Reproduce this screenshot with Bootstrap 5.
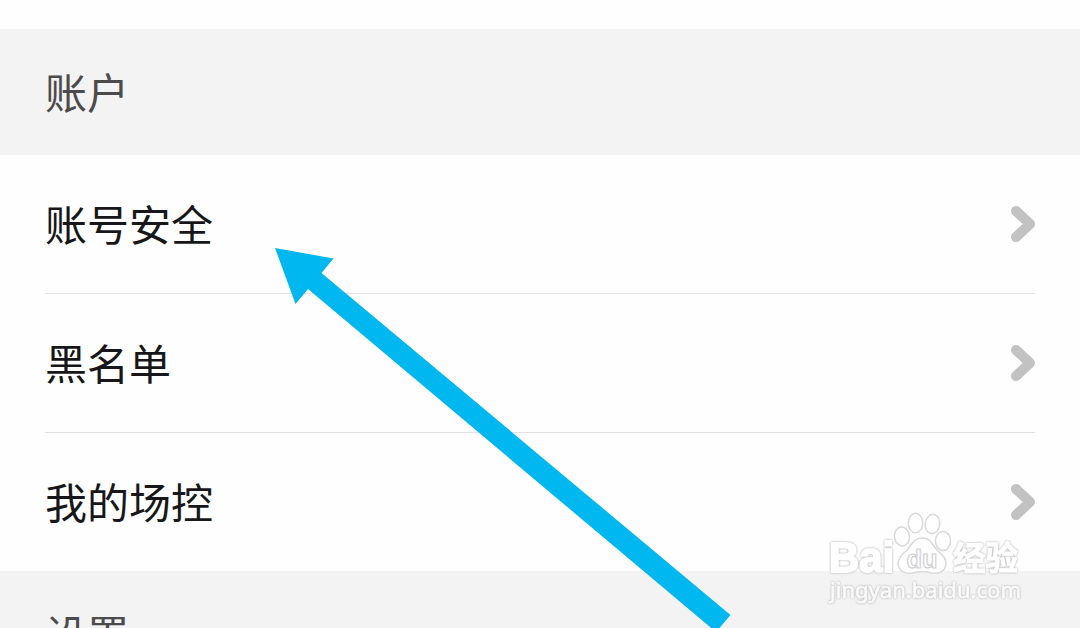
<!DOCTYPE html>
<html lang="zh-CN">
<head>
    <meta charset="UTF-8">
    <meta name="viewport" content="width=device-width, initial-scale=1.0">
    <title>设置</title>
    <link href="https://cdn.jsdelivr.net/npm/bootstrap@5.3.0/dist/css/bootstrap.min.css" rel="stylesheet">
    <style>
        body {
            height: 628px;
            padding-top: 29px;
            background-color: #fefefe;
            color: #17171a;
            font-family: "Noto Sans CJK SC", sans-serif;
            font-size: 42px;
            line-height: 62px;
        }
        .section-title {
            height: 126px;
            padding: 31px 45px 0;
            background-color: #f3f3f3;
            color: #4b4b4b;
        }
        .section-last {
            height: 57px;
            overflow: hidden;
        }
        .settings-list .list-group-item {
            height: 139px;
            margin: 0 45px;
            padding: 0;
            background-color: transparent;
            color: inherit;
            border-color: #e2e2e2;
        }
        .settings-list .list-group-item:last-child {
            height: 138px;
        }
        .settings-list span {
            padding-bottom: 3px;
        }
        .settings-list svg {
            width: 24px;
            height: 36px;
        }
        /* Pointer and watermark lie over the list */
        .overlay-art {
            z-index: 5;
            pointer-events: none;
        }
        .wm-outline {
            filter: drop-shadow(0 0 .8px #a8a8a8);
        }
    </style>
</head>
<body class="position-relative overflow-hidden">

<div class="section-title">账户</div>

<div class="list-group list-group-flush settings-list">
    <a href="#" class="list-group-item d-flex align-items-center justify-content-between">
        <span>账号安全</span>
        <svg viewBox="0 0 24 36" fill="none" stroke="#c2c2c2" stroke-width="10" stroke-linecap="round" stroke-linejoin="round"><path d="M5 5 19 18 5 31"/></svg>
    </a>
    <a href="#" class="list-group-item d-flex align-items-center justify-content-between">
        <span>黑名单</span>
        <svg viewBox="0 0 24 36" fill="none" stroke="#c2c2c2" stroke-width="10" stroke-linecap="round" stroke-linejoin="round"><path d="M5 5 19 18 5 31"/></svg>
    </a>
    <a href="#" class="list-group-item d-flex align-items-center justify-content-between">
        <span>我的场控</span>
        <svg viewBox="0 0 24 36" fill="none" stroke="#c2c2c2" stroke-width="10" stroke-linecap="round" stroke-linejoin="round"><path d="M5 5 19 18 5 31"/></svg>
    </a>
</div>

<div class="section-title section-last">设置</div>

<svg class="overlay-art position-absolute top-0 start-0" width="1080" height="628" viewBox="0 0 1080 628">
    <!-- Arrow -->
    <path d="M275 248 333.500 258.500 321.500 273 730.500 615 716 632 308 289 295.500 304Z" fill="#00b7ef"/>
    <!-- Watermark -->
    <g class="wm-outline" fill="#fff" stroke="#fff" stroke-linejoin="round">
        <text x="829" y="572" font-family="Liberation Sans, sans-serif" font-weight="700" font-size="42" textLength="65" lengthAdjust="spacingAndGlyphs" stroke-width="2">Bai</text>
        <text x="953" y="570" font-family="Noto Sans CJK SC, sans-serif" font-weight="700" font-size="33" textLength="65" lengthAdjust="spacingAndGlyphs" stroke-width="1">经验</text>
        <text x="830" y="598" font-family="Noto Sans, sans-serif" font-size="22" textLength="191" lengthAdjust="spacingAndGlyphs" fill="#fafafa" stroke="#fafafa" stroke-width=".6">jingyan.baidu.com</text>
    </g>
    <g fill="#fff" stroke="#d9d9d9" stroke-width="1.500">
        <ellipse cx="902" cy="536.500" rx="7.500" ry="9.500" transform="rotate(-8 902 536.500)"/>
        <ellipse cx="915.500" cy="523" rx="7.200" ry="9.700"/>
        <ellipse cx="932.500" cy="524" rx="7.200" ry="9.700" transform="rotate(8 932.500 524)"/>
        <ellipse cx="943" cy="541" rx="7.500" ry="9.500"/>
        <path d="M922 538C913 538 911 546 906 551C901 555 898 559 898 564C899 572 906 574 912 573C919 571 926 571 932 573C940 574 946 571 946 563C946 557 941 554 937 550C932 545 931 538 922 538Z"/>
        <text x="906.500" y="568" font-family="Liberation Sans, sans-serif" font-weight="700" font-size="26" textLength="31" lengthAdjust="spacingAndGlyphs" stroke="#cfcfcf" stroke-width="1.200">du</text>
    </g>
</svg>

<script src="https://cdn.jsdelivr.net/npm/bootstrap@5.3.0/dist/js/bootstrap.bundle.min.js"></script>
</body>
</html>
